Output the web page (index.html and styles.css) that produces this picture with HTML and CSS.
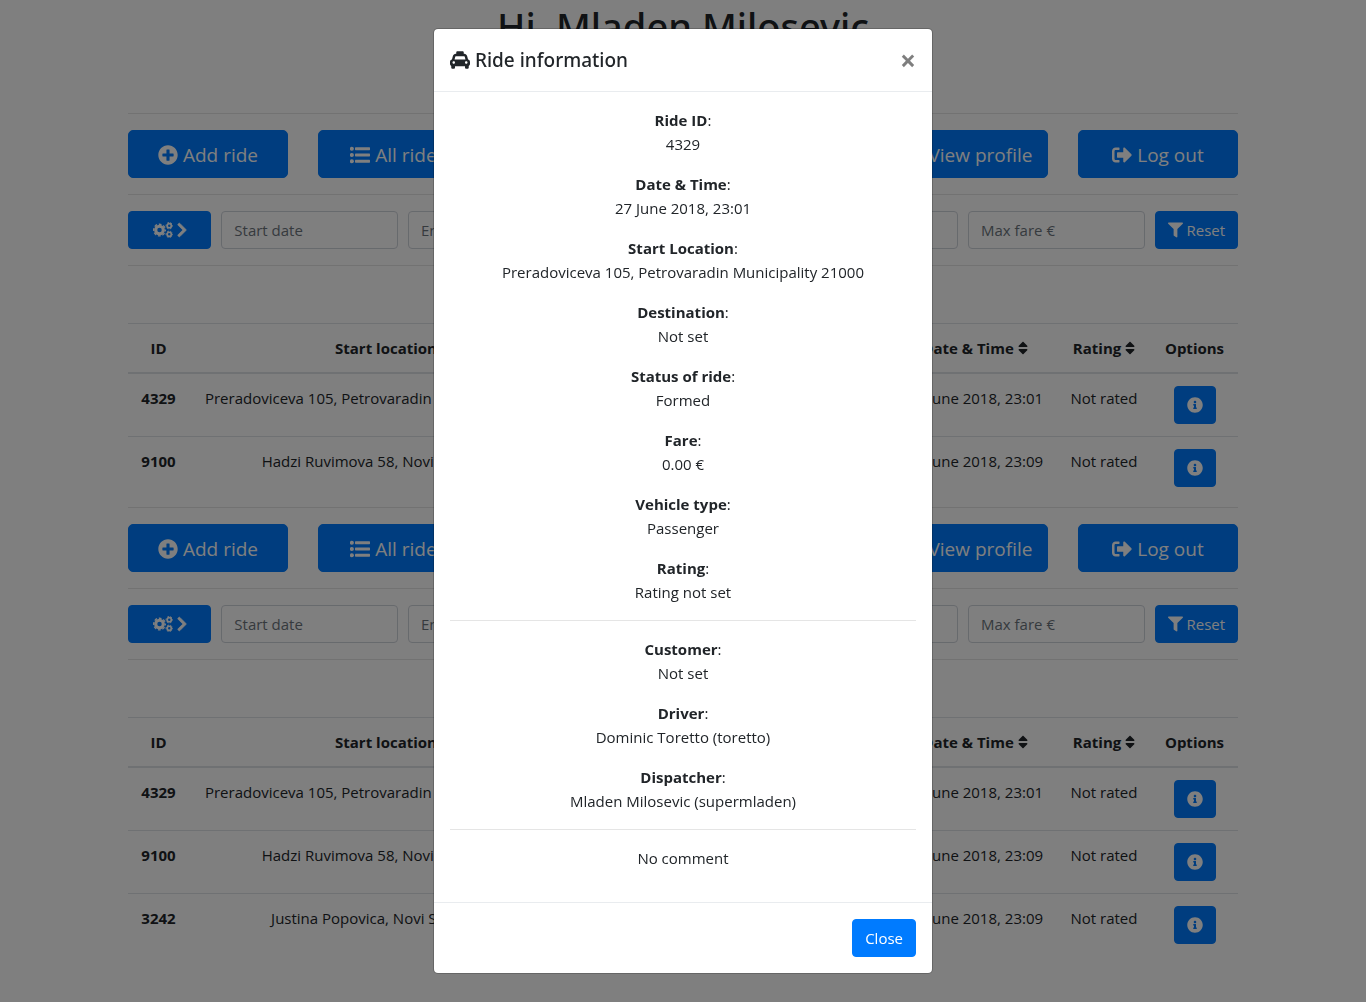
FILE: index.html
```html
<!DOCTYPE html>
<html lang="en">
<head>
<meta charset="utf-8">
<meta name="viewport" content="width=device-width, initial-scale=1">
<title>Ride information</title>
<link rel="stylesheet" href="styles.css">
</head>
<body>
<svg class="sprite" aria-hidden="true">
  <symbol id="plus" viewBox="0 0 512 512"><path d="M256 8C119 8 8 119 8 256s111 248 248 248 248-111 248-248S393 8 256 8zm144 276c0 6.600-5.400 12-12 12h-92v92c0 6.600-5.400 12-12 12h-56c-6.600 0-12-5.400-12-12v-92h-92c-6.600 0-12-5.400-12-12v-56c0-6.600 5.400-12 12-12h92v-92c0-6.600 5.400-12 12-12h56c6.600 0 12 5.400 12 12v92h92c6.600 0 12 5.400 12 12v56z"/></symbol>
  <symbol id="list" viewBox="0 0 512 512"><circle cx="48" cy="96" r="52"/><circle cx="48" cy="256" r="52"/><circle cx="48" cy="416" r="52"/><rect x="128" y="60" width="384" height="72" rx="16"/><rect x="128" y="220" width="384" height="72" rx="16"/><rect x="128" y="380" width="384" height="72" rx="16"/></symbol>
  <symbol id="user" viewBox="0 0 512 512"><circle cx="256" cy="144" r="128"/><path d="M32 464c0-90 60-160 134-160h180c74 0 134 70 134 160 0 26-22 48-48 48H80c-26 0-48-22-48-48z"/></symbol>
  <symbol id="logout" viewBox="0 0 512 512"><path d="M497 273L329 441c-15 15-41 4.500-41-17v-96H152c-13.300 0-24-10.700-24-24v-96c0-13.300 10.700-24 24-24h136V88c0-21.400 25.900-32 41-17l168 168c9.300 9.400 9.300 24.600 0 34zM192 436v-40c0-6.600-5.400-12-12-12H96c-17.700 0-32-14.300-32-32V160c0-17.700 14.300-32 32-32h84c6.600 0 12-5.400 12-12V76c0-6.600-5.400-12-12-12H96c-53 0-96 43-96 96v192c0 53 43 96 96 96h84c6.600 0 12-5.400 12-12z"/></symbol>
  <symbol id="cogs" viewBox="0 0 640 512"><g fill="none" stroke="currentColor"><circle cx="208" cy="256" r="122" stroke-width="100"/><circle cx="208" cy="256" r="186" stroke-width="44" pathLength="16" stroke-dasharray="1.200 0.800" stroke-dashoffset="0.600"/><circle cx="520" cy="118" r="66" stroke-width="54"/><circle cx="520" cy="118" r="102" stroke-width="30" pathLength="12" stroke-dasharray="1.200 0.800" stroke-dashoffset="0.600"/><circle cx="520" cy="394" r="66" stroke-width="54"/><circle cx="520" cy="394" r="102" stroke-width="30" pathLength="12" stroke-dasharray="1.200 0.800" stroke-dashoffset="0.600"/></g></symbol>
  <symbol id="chevron" viewBox="0 0 320 512"><path stroke="currentColor" stroke-width="24" d="M285.476 272.971L91.132 467.314c-9.373 9.373-24.569 9.373-33.941 0l-22.667-22.667c-9.357-9.357-9.375-24.522-.04-33.901L188.505 256 34.484 101.255c-9.335-9.379-9.317-24.544.04-33.901l22.667-22.667c9.373-9.373 24.569-9.373 33.941 0L285.475 239.030c9.373 9.372 9.373 24.568.001 33.941z"/></symbol>
  <symbol id="filter" viewBox="0 0 512 512"><path d="M487.976 0H24.028C2.710 0-8.047 25.866 7.058 40.971L192 225.941V432c0 7.831 3.821 15.170 10.237 19.662l80 55.980C298.020 518.690 320 507.493 320 487.980V225.941l184.947-184.970C520.021 25.896 509.338 0 487.976 0z"/></symbol>
  <symbol id="sort" viewBox="0 0 320 512"><path d="M41 288h238c21.400 0 32.100 25.900 17 41L177 448c-9.400 9.400-24.600 9.400-33.900 0L24 329c-15.100-15.100-4.400-41 17-41zm255-105L177 64c-9.400-9.400-24.600-9.400-33.900 0L24 183c-15.100 15.100-4.400 41 17 41h238c21.400 0 32.100-25.900 17-41z"/></symbol>
  <symbol id="info" viewBox="0 0 512 512"><path d="M256 8C119.043 8 8 119.083 8 256c0 136.997 111.043 248 248 248s248-111.003 248-248C504 119.083 392.957 8 256 8zm0 110c23.196 0 42 18.804 42 42s-18.804 42-42 42-42-18.804-42-42 18.804-42 42-42zm56 254c0 6.627-5.373 12-12 12h-88c-6.627 0-12-5.373-12-12v-24c0-6.627 5.373-12 12-12h12v-64h-12c-6.627 0-12-5.373-12-12v-24c0-6.627 5.373-12 12-12h64c6.627 0 12 5.373 12 12v100h12c6.627 0 12 5.373 12 12v24z"/></symbol>
  <symbol id="taxi" viewBox="0 0 512 512"><path d="M462 241.640l-22-84.840c-9.600-35.200-41.600-60.800-76.800-60.800H352V64c0-17.670-14.330-32-32-32H192c-17.670 0-32 14.330-32 32v32h-11.200c-35.200 0-67.200 25.600-76.800 60.800l-22 84.840C21.410 248.040 0 273.470 0 304v48c0 23.630 12.950 44.040 32 55.120V448c0 17.670 14.330 32 32 32h32c17.670 0 32-14.330 32-32v-32h256v32c0 17.670 14.330 32 32 32h32c17.670 0 32-14.330 32-32v-40.880c19.050-11.090 32-31.500 32-55.120v-48c0-30.530-21.410-55.960-50-62.360zM96 352c-17.670 0-32-14.330-32-32s14.330-32 32-32 32 14.330 32 32-14.330 32-32 32zm20.550-112l17.200-66.360c2.230-8.160 9.590-13.640 15.060-13.640h214.400c5.470 0 12.830 5.480 14.850 12.860L395.480 240H116.550zM416 352c-17.670 0-32-14.330-32-32s14.330-32 32-32 32 14.330 32 32-14.330 32-32 32z"/></symbol>
</svg>

<main class="container">
  <h1 class="greeting">Hi, Mladen Milosevic</h1>

  <section class="panel">
    <nav class="menu">
      <button class="btn btn-lg" type="button"><svg class="icon"><use href="#plus"/></svg> Add ride</button>
      <button class="btn btn-lg" type="button"><svg class="icon"><use href="#list"/></svg> All rides</button>
      <button class="btn btn-lg" type="button">My rides</button>
      <button class="btn btn-lg" type="button">Drivers</button>
      <button class="btn btn-lg" type="button"><svg class="icon"><use href="#user"/></svg> View profile</button>
      <button class="btn btn-lg" type="button"><svg class="icon"><use href="#logout"/></svg> Log out</button>
    </nav>
    <form class="filters">
      <button class="btn" type="button" aria-label="More filters"><svg class="icon icon-wide"><use href="#cogs"/></svg> <svg class="icon icon-narrow"><use href="#chevron"/></svg></button>
      <input class="field" type="text" placeholder="Start date" aria-label="Start date">
      <input class="field" type="text" placeholder="End date" aria-label="End date">
      <input class="field" type="text" placeholder="Min rating" aria-label="Min rating">
      <input class="field" type="text" placeholder="Min fare €" aria-label="Min fare">
      <input class="field" type="text" placeholder="Max fare €" aria-label="Max fare">
      <button class="btn btn-reset" type="reset"><svg class="icon"><use href="#filter"/></svg> Reset</button>
    </form>
    <table class="rides">
      <colgroup><col class="col-id"><col class="col-start"><col><col class="col-date"><col class="col-rating"><col class="col-options"></colgroup>
      <thead>
        <tr><th>ID</th><th>Start location</th><th>Status</th><th>Date &amp; Time <svg class="icon icon-narrow"><use href="#sort"/></svg></th><th>Rating <svg class="icon icon-narrow"><use href="#sort"/></svg></th><th>Options</th></tr>
      </thead>
      <tbody>
        <tr><th>4329</th><td>Preradoviceva 105, Petrovaradin Municipality 21000</td><td>Formed</td><td>27 June 2018, 23:01</td><td>Not rated</td><td><button class="btn" type="button" aria-label="Ride details"><svg class="icon"><use href="#info"/></svg></button></td></tr>
        <tr><th>9100</th><td>Hadzi Ruvimova 58, Novi Sad 21000</td><td>Formed</td><td>27 June 2018, 23:09</td><td>Not rated</td><td><button class="btn" type="button" aria-label="Ride details"><svg class="icon"><use href="#info"/></svg></button></td></tr>
      </tbody>
    </table>
  </section>

  <section class="panel">
    <nav class="menu">
      <button class="btn btn-lg" type="button"><svg class="icon"><use href="#plus"/></svg> Add ride</button>
      <button class="btn btn-lg" type="button"><svg class="icon"><use href="#list"/></svg> All rides</button>
      <button class="btn btn-lg" type="button">My rides</button>
      <button class="btn btn-lg" type="button">Drivers</button>
      <button class="btn btn-lg" type="button"><svg class="icon"><use href="#user"/></svg> View profile</button>
      <button class="btn btn-lg" type="button"><svg class="icon"><use href="#logout"/></svg> Log out</button>
    </nav>
    <form class="filters">
      <button class="btn" type="button" aria-label="More filters"><svg class="icon icon-wide"><use href="#cogs"/></svg> <svg class="icon icon-narrow"><use href="#chevron"/></svg></button>
      <input class="field" type="text" placeholder="Start date" aria-label="Start date">
      <input class="field" type="text" placeholder="End date" aria-label="End date">
      <input class="field" type="text" placeholder="Min rating" aria-label="Min rating">
      <input class="field" type="text" placeholder="Min fare €" aria-label="Min fare">
      <input class="field" type="text" placeholder="Max fare €" aria-label="Max fare">
      <button class="btn btn-reset" type="reset"><svg class="icon"><use href="#filter"/></svg> Reset</button>
    </form>
    <table class="rides">
      <colgroup><col class="col-id"><col class="col-start"><col><col class="col-date"><col class="col-rating"><col class="col-options"></colgroup>
      <thead>
        <tr><th>ID</th><th>Start location</th><th>Status</th><th>Date &amp; Time <svg class="icon icon-narrow"><use href="#sort"/></svg></th><th>Rating <svg class="icon icon-narrow"><use href="#sort"/></svg></th><th>Options</th></tr>
      </thead>
      <tbody>
        <tr><th>4329</th><td>Preradoviceva 105, Petrovaradin Municipality 21000</td><td>Formed</td><td>27 June 2018, 23:01</td><td>Not rated</td><td><button class="btn" type="button" aria-label="Ride details"><svg class="icon"><use href="#info"/></svg></button></td></tr>
        <tr><th>9100</th><td>Hadzi Ruvimova 58, Novi Sad 21000</td><td>Formed</td><td>27 June 2018, 23:09</td><td>Not rated</td><td><button class="btn" type="button" aria-label="Ride details"><svg class="icon"><use href="#info"/></svg></button></td></tr>
        <tr><th>3242</th><td>Justina Popovica, Novi Sad 21000</td><td>Formed</td><td>27 June 2018, 23:09</td><td>Not rated</td><td><button class="btn" type="button" aria-label="Ride details"><svg class="icon"><use href="#info"/></svg></button></td></tr>
      </tbody>
    </table>
  </section>
</main>

<div class="backdrop">
  <div class="modal" role="dialog" aria-modal="true" aria-labelledby="modal-title">
    <header class="modal-header">
      <h2 class="modal-title" id="modal-title"><svg class="icon"><use href="#taxi"/></svg> Ride information</h2>
      <button class="close" type="button" aria-label="Close dialog">×</button>
    </header>
    <div class="modal-body">
      <p><b>Ride ID</b>:<br>4329</p>
      <p><b>Date &amp; Time</b>:<br>27 June 2018, 23:01</p>
      <p><b>Start Location</b>:<br>Preradoviceva 105, Petrovaradin Municipality 21000</p>
      <p><b>Destination</b>:<br>Not set</p>
      <p><b>Status of ride</b>:<br>Formed</p>
      <p><b>Fare</b>:<br>0.00 €</p>
      <p><b>Vehicle type</b>:<br>Passenger</p>
      <p><b>Rating</b>:<br>Rating not set</p>
      <hr>
      <p><b>Customer</b>:<br>Not set</p>
      <p><b>Driver</b>:<br>Dominic Toretto (toretto)</p>
      <p><b>Dispatcher</b>:<br>Mladen Milosevic (supermladen)</p>
      <hr>
      <p>No comment</p>
    </div>
    <footer class="modal-footer">
      <button class="btn" type="button">Close</button>
    </footer>
  </div>
</div>
</body>
</html>
```

FILE: styles.css
```css
*,
*::before,
*::after {
  box-sizing: border-box;
}

body {
  margin: 0;
  overflow: hidden;
  background: #fff;
  color: #212529;
  font: 400 15px/24px "Open Sans", "Noto Sans", sans-serif;
}

.sprite {
  display: none;
}

.icon {
  display: inline-block;
  width: 1em;
  height: 1em;
  fill: currentColor;
  vertical-align: -2px;
}

.icon-wide {
  width: 20px;
  height: 16px;
}

.icon-narrow {
  width: 10px;
  height: 16px;
}

.container {
  max-width: 1140px;
  margin: 0 auto;
  padding: 0 15px;
}

.greeting {
  margin: 0 0 63px;
  padding-top: 2px;
  font-family: "Noto Sans", "Open Sans", sans-serif;
  font-size: 38px;
  font-weight: 500;
  line-height: 48px;
  text-align: center;
}

/* Buttons and fields */
.btn {
  padding: 6px 12px;
  border: 1px solid #007bff;
  border-radius: 4px;
  background: #007bff;
  color: #fff;
  font: 400 15px/24px "Open Sans", "Noto Sans", sans-serif;
  white-space: nowrap;
}

.btn .icon {
  height: 16px;
}

.btn-lg {
  padding: 9px 8px 7px;
  border-radius: 5px;
  font-size: 19px;
  line-height: 30px;
}

.btn-lg .icon {
  width: 20px;
  height: 20px;
  vertical-align: -3px;
}

.btn-reset {
  padding: 6px 8px;
}

.field {
  grid-column: span 2;
  width: 100%;
  min-width: 0;
  height: 38px;
  padding: 6px 12px;
  border: 1px solid #ced4da;
  border-radius: 4px;
  background: #fff;
  color: #495057;
  font: 400 15px/24px "Open Sans", "Noto Sans", sans-serif;
}

.field::placeholder {
  color: #6c757d;
  opacity: 1;
}

/* Ride panels */
.panel {
  margin-bottom: 8px;
  border-top: 1px solid #e5e5e5;
}

.menu {
  display: grid;
  grid-template-columns: repeat(6, 1fr);
  gap: 30px;
  padding: 16px 0;
  border-bottom: 1px solid #e5e5e5;
}

.filters {
  display: grid;
  grid-template-columns: repeat(12, 1fr);
  gap: 10px;
  margin-bottom: 57px;
  padding: 16px 0;
  border-bottom: 1px solid #e5e5e5;
}

.rides {
  width: 100%;
  border-spacing: 0;
  table-layout: fixed;
  text-align: center;
}

.rides th,
.rides td {
  padding: 12px 0;
  border-top: 1px solid #dee2e6;
  vertical-align: top;
  white-space: nowrap;
}

.rides th {
  font-weight: 700;
}

.rides thead th {
  border-bottom: 2px solid #dee2e6;
}

.rides tbody tr:first-child > * {
  border-top: 0;
}

.rides .btn {
  display: block;
  margin: 0 auto;
}

.rides .btn .icon {
  width: 16px;
}

.col-id {
  width: 61px;
}

.col-start {
  width: 394px;
}

.col-date {
  width: 164px;
}

.col-rating {
  width: 94px;
}

.col-options {
  width: 87px;
}

/* Dialog */
.backdrop {
  position: fixed;
  inset: 0;
  overflow: auto;
  padding: 28px 8px;
  background: rgba(0, 0, 0, 0.5);
}

.modal {
  max-width: 500px;
  margin: 0 auto;
  border: 1px solid rgba(0, 0, 0, 0.2);
  border-radius: 5px;
  background: #fff;
  background-clip: padding-box;
}

.modal-header {
  display: flex;
  align-items: center;
  justify-content: space-between;
  padding: 16px;
  border-bottom: 1px solid #e9ecef;
}

.modal-title {
  margin: 0;
  font-family: "Noto Sans", "Open Sans", sans-serif;
  font-size: 19px;
  font-weight: 500;
  line-height: 30px;
}

.modal-title .icon {
  width: 20px;
  height: 20px;
  vertical-align: -3px;
}

.close {
  padding: 0;
  border: 0;
  background: none;
  color: #000;
  font: 700 28px/24px "Open Sans", "Noto Sans", sans-serif;
  opacity: 0.5;
}

.modal-body {
  padding: 16px;
  text-align: center;
}

.modal-body p {
  margin: 0 0 16px;
}

.modal-body b {
  font-weight: 700;
}

.modal-body hr {
  margin: 16px 0;
  border: 0;
  border-top: 1px solid #e5e5e5;
}

.modal-footer {
  display: flex;
  justify-content: flex-end;
  padding: 16px;
  border-top: 1px solid #e9ecef;
}
```
